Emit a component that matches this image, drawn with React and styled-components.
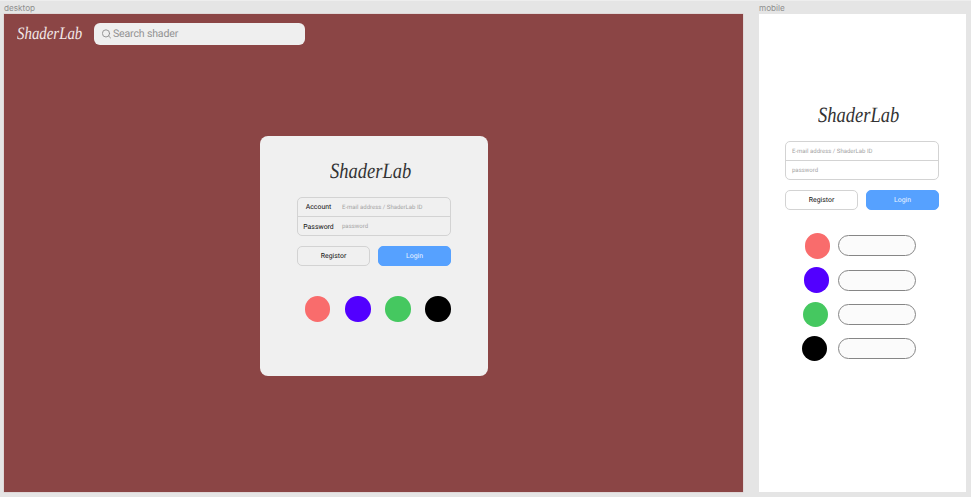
import React from "react";
import styled, { createGlobalStyle } from "styled-components";

const GlobalStyle = createGlobalStyle`
  *, *::before, *::after { box-sizing: border-box; }
  body {
    margin: 0;
    background: #e5e5e5;
    font-family: Roboto, "Liberation Sans", sans-serif;
    text-rendering: geometricPrecision;
    overflow: hidden;
  }
`;

const SWATCHES = ["#f96c6c", "#5200ff", "#45c860", "#000000"];

const Canvas = styled.main`
  width: 971px;
  height: 497px;
  padding: 2px 5px 0 4px;
  display: flex;
  gap: 16px;
  border-top: 1px solid #eeeeee;
  background: #e5e5e5;
`;

const FrameColumn = styled.section`
  width: ${({ $width }) => $width}px;
  display: flex;
  flex-direction: column;
`;

const FrameLabel = styled.div`
  height: 11px;
  font: 400 8.2px/11px Inter, sans-serif;
  text-rendering: auto;
  color: #8f8f8f;
  white-space: nowrap;
`;

const DesktopFrame = styled.div`
  height: 478px;
  background: #8b4545;
  box-shadow: 0 0 0 0.5px #d9c9c9;
  display: flex;
  flex-direction: column;
`;

const MobileFrame = styled.div`
  height: 478px;
  background: #ffffff;
  display: flex;
  flex-direction: column;
  align-items: center;
  padding: 87px 1px 0 0;
`;

const TopBar = styled.header`
  display: flex;
  align-items: flex-start;
  padding: 9px 0 0 13px;
`;

const Logo = styled.div`
  width: ${({ $width }) => $width}px;
  height: 28px;
  font: italic 400 ${({ $size }) => $size}px/28px "Liberation Serif", serif;
  color: ${({ $color }) => $color || "#333333"};
  white-space: nowrap;
  transform: scaleX(0.85);
  transform-origin: left center;
`;

const BarLogo = styled(Logo)`
  margin-top: -4px;
`;

const SearchBox = styled.div`
  width: 211.5px;
  height: 22px;
  margin-left: 11.7px;
  padding-left: 8px;
  border-radius: 6px;
  background: #efefef;
  display: flex;
  align-items: center;
  gap: 2.3px;
  font-size: 10.6px;
  letter-spacing: -0.18px;
  line-height: 22px;
  color: #929292;
`;

const Card = styled.div`
  width: 228px;
  height: 240px;
  margin: 88.5px 0 0 256px;
  padding: 21.5px 37px 0;
  border-radius: 8px;
  background: #f0f0f0;
  display: flex;
  flex-direction: column;
`;

const CardLogo = styled(Logo)`
  margin-left: 33px;
`;

const Fields = styled.div`
  width: 154px;
  height: 39px;
  margin-top: 12px;
  border: 1px solid #d3d3d3;
  border-radius: 5px;
  display: flex;
  flex-direction: column;
  flex-shrink: 0;
`;

const Field = styled.div`
  height: ${({ $last }) => ($last ? 18 : 19)}px;
  padding-left: 6px;
  border-bottom: ${({ $last }) => ($last ? "0" : "1px solid #d3d3d3")};
  display: flex;
  align-items: center;
  line-height: 10px;
  white-space: nowrap;
`;

const FieldName = styled.span`
  width: 38px;
  padding-right: 9px;
  padding-top: ${({ $drop }) => $drop || 0}px;
  display: flex;
  justify-content: center;
  font-size: 6.9px;
  color: #111111;
`;

const Placeholder = styled.span`
  padding-top: 1.5px;
  font-size: 6px;
  color: #a4a4a4;
`;

const Buttons = styled.div`
  width: 154px;
  margin-top: 10px;
  display: flex;
  justify-content: space-between;
`;

const Button = styled.button`
  width: 73px;
  height: 20px;
  padding: 0;
  border: 1px solid ${({ $primary }) => ($primary ? "#56a1ff" : "#d3d3d3")};
  border-radius: 5px;
  background: ${({ $primary }) => ($primary ? "#56a1ff" : "transparent")};
  color: ${({ $primary }) => ($primary ? "#eaf3ff" : "#111111")};
  font: 400 6.9px/18px Roboto, sans-serif;
  text-rendering: inherit;
`;

const SwatchRow = styled.div`
  display: flex;
  gap: 14.7px;
  margin: 30px 0 0 7.9px;
`;

const Swatch = styled.span`
  width: 25.5px;
  height: 25.5px;
  flex-shrink: 0;
  border-radius: 50%;
  background: ${({ $color }) => $color};
`;

const SwatchList = styled.div`
  width: 154px;
  display: flex;
  flex-direction: column;
  gap: 8.8px;
  margin-top: 23px;
`;

const SwatchItem = styled.div`
  height: 25.5px;
  padding-right: 23px;
  padding-left: ${({ $indent }) => $indent}px;
  display: flex;
  align-items: center;
  justify-content: space-between;
`;

const Pill = styled.span`
  width: 78px;
  height: 21px;
  border: 1px solid #868686;
  border-radius: 11px;
  background: #fbfbfb;
`;

function SearchIcon() {
  return (
    <svg width="9" height="10" viewBox="0 0 9 10" fill="none" stroke="#8c8c8c" strokeWidth="0.9" strokeLinecap="round">
      <circle cx="4" cy="4.4" r="3.6" />
      <path d="M6.6 7 8.6 9" />
    </svg>
  );
}

function Actions() {
  return (
    <Buttons>
      <Button>Registor</Button>
      <Button $primary>Login</Button>
    </Buttons>
  );
}

export default function App() {
  return (
    <>
      <GlobalStyle />
      <Canvas>
        <FrameColumn $width={739}>
          <FrameLabel>desktop</FrameLabel>
          <DesktopFrame>
            <TopBar>
              <BarLogo $width={65} $size={17.5} $color="#f2e8e8">ShaderLab</BarLogo>
              <SearchBox>
                <SearchIcon />
                Search shader
              </SearchBox>
            </TopBar>
            <Card>
              <CardLogo $width={82} $size={21.8}>ShaderLab</CardLogo>
              <Fields>
                <Field>
                  <FieldName>Account</FieldName>
                  <Placeholder>E-mail address / ShaderLab ID</Placeholder>
                </Field>
                <Field $last>
                  <FieldName $drop={2}>Password</FieldName>
                  <Placeholder>password</Placeholder>
                </Field>
              </Fields>
              <Actions />
              <SwatchRow>
                {SWATCHES.map((color) => (
                  <Swatch key={color} $color={color} />
                ))}
              </SwatchRow>
            </Card>
          </DesktopFrame>
        </FrameColumn>
        <FrameColumn $width={207}>
          <FrameLabel>mobile</FrameLabel>
          <MobileFrame>
            <Logo $width={89} $size={21.8}>ShaderLab</Logo>
            <Fields>
              <Field>
                <Placeholder>E-mail address / ShaderLab ID</Placeholder>
              </Field>
              <Field $last>
                <Placeholder>password</Placeholder>
              </Field>
            </Fields>
            <Actions />
            <SwatchList>
              {SWATCHES.map((color, index) => (
                <SwatchItem key={color} $indent={19.5 - index * 0.9}>
                  <Swatch $color={color} />
                  <Pill />
                </SwatchItem>
              ))}
            </SwatchList>
          </MobileFrame>
        </FrameColumn>
      </Canvas>
    </>
  );
}
